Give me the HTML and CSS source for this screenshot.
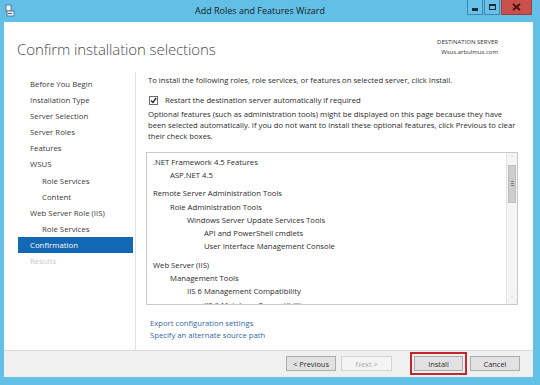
FILE: index.html
```html
<!DOCTYPE html>
<html lang="en">
<head>
    <meta charset="UTF-8">
    <title>Add Roles and Features Wizard</title>
    <link rel="stylesheet" href="styles.css">
</head>
<body>
    <div class="window">
        <div class="titlebar">
            <svg class="app-icon" width="10" height="13" viewBox="0 0 10 13">
                <rect x="1" y="1" width="5" height="6" fill="#f4f4f4" stroke="#4a6a86" stroke-width="0.8"/>
                <rect x="2" y="7" width="7" height="5" fill="#e8eef4" stroke="#4a6a86" stroke-width="0.8"/>
                <rect x="3" y="9" width="4" height="1" fill="#4a6a86"/>
            </svg>
            <div class="title">Add Roles and Features Wizard</div>
            <div class="caption-buttons">
                <div class="cap-btn min"><span class="min-glyph"></span></div>
                <div class="cap-btn max"><span class="max-glyph"></span></div>
                <div class="cap-btn close">
                    <svg width="9" height="8" viewBox="0 0 9 8">
                        <path d="M1 1 L8 7 M8 1 L1 7" stroke="#4a1414" stroke-width="2"/>
                    </svg>
                </div>
            </div>
        </div>

        <div class="client">
            <div class="main">
                <div class="header">
                    <h1>Confirm installation selections</h1>
                    <div class="dest">
                        <div>DESTINATION SERVER</div>
                        <div>Wsus.arbulmus.com</div>
                    </div>
                </div>

                <div class="body">
                    <ul class="nav">
                        <li>Before You Begin</li>
                        <li>Installation Type</li>
                        <li>Server Selection</li>
                        <li>Server Roles</li>
                        <li>Features</li>
                        <li>WSUS</li>
                        <li class="sub">Role Services</li>
                        <li class="sub">Content</li>
                        <li>Web Server Role (IIS)</li>
                        <li class="sub">Role Services</li>
                        <li class="active">Confirmation</li>
                        <li class="disabled">Results</li>
                    </ul>

                    <div class="content">
                        <p class="intro">To install the following roles, role services, or features on selected server, click Install.</p>
                        <label class="check-row">
                            <span class="checkbox">
                                <svg width="7" height="7" viewBox="0 0 7 7">
                                    <path d="M1 3.5 L3 5.5 L6.2 1" fill="none" stroke="#222" stroke-width="1.3"/>
                                </svg>
                            </span>
                            Restart the destination server automatically if required
                        </label>
                        <p class="note">Optional features (such as administration tools) might be displayed on this page because they have been selected automatically. If you do not want to install these optional features, click Previous to clear their check boxes.</p>

                        <div class="listbox">
                            <div class="list">
                                <div class="group">
                                    <div class="item">.NET Framework 4.5 Features</div>
                                    <div class="item l1">ASP.NET 4.5</div>
                                </div>
                                <div class="group">
                                    <div class="item">Remote Server Administration Tools</div>
                                    <div class="item l1">Role Administration Tools</div>
                                    <div class="item l2">Windows Server Update Services Tools</div>
                                    <div class="item l3">API and PowerShell cmdlets</div>
                                    <div class="item l3">User Interface Management Console</div>
                                </div>
                                <div class="group">
                                    <div class="item">Web Server (IIS)</div>
                                    <div class="item l1">Management Tools</div>
                                    <div class="item l2">IIS 6 Management Compatibility</div>
                                    <div class="item l3">IIS 6 Metabase Compatibility</div>
                                </div>
                            </div>
                            <div class="scrollbar">
                                <div class="arrow">&#708;</div>
                                <div class="track">
                                    <div class="thumb"><span class="grip"></span></div>
                                </div>
                                <div class="arrow">&#709;</div>
                            </div>
                        </div>

                        <div class="links">
                            <a href="#">Export configuration settings</a>
                            <a href="#">Specify an alternate source path</a>
                        </div>
                    </div>
                </div>
            </div>

            <div class="footer">
                <button class="btn">&lt; Previous</button>
                <button class="btn" disabled>Next &gt;</button>
                <button class="btn install">Install</button>
                <button class="btn">Cancel</button>
            </div>
        </div>
    </div>
</body>
</html>
```

FILE: styles.css
```css
* {
    box-sizing: border-box;
}

html, body {
    margin: 0;
    padding: 0;
}

body {
    font-family: 'Open Sans', 'Noto Sans', sans-serif;
    color: #2b2b2b;
    background-color: #62bfe6;
}

.window {
    width: 540px;
    height: 385px;
    display: flex;
    flex-direction: column;
}

/* タイトルバー */
.titlebar {
    height: 22px;
    display: flex;
    align-items: flex-start;
    position: relative;
}

.app-icon {
    margin: 4px 0 0 5px;
}

.title {
    position: absolute;
    left: 0;
    right: 20px;
    top: 4px;
    text-align: center;
    font-size: 9px;
    color: #1a1a1a;
}

.caption-buttons {
    margin-left: auto;
    margin-right: 8px;
    display: flex;
    gap: 1px;
}

.cap-btn {
    height: 15px;
    width: 16px;
    display: flex;
    align-items: center;
    justify-content: center;
    border: 1px solid #3f86ad;
    border-top: none;
    background-color: #66c2e8;
}

.cap-btn.close {
    width: 31px;
    background-color: #c9504b;
    border-color: #a43d38;
}

.min-glyph {
    width: 6px;
    height: 3px;
    margin-top: 5px;
    background-color: #1c2a35;
}

.max-glyph {
    width: 7px;
    height: 6px;
    border: 1px solid #1c2a35;
    border-top-width: 2px;
}

/* 本体 */
.client {
    flex: 1;
    margin: 0 7px 8px 4px;
    display: flex;
    flex-direction: column;
    background-color: #fff;
}

.main {
    flex: 1;
    display: flex;
    flex-direction: column;
}

.header {
    height: 50px;
    display: flex;
    justify-content: space-between;
    padding: 0 35px 0 13px;
}

.header h1 {
    margin: 16px 0 0;
    font-size: 15px;
    font-weight: 300;
    line-height: 22px;
    color: #4a4a4a;
    letter-spacing: -0.1px;
}

.dest {
    margin-top: 15px;
    text-align: right;
    font-size: 6px;
    line-height: 10px;
    color: #333;
}

.body {
    flex: 1;
    display: flex;
}

.nav {
    list-style: none;
    margin: 0;
    padding: 4px 0 0 14px;
    width: 132px;
    border-right: 1px solid #e3e3e3;
    font-size: 7.8px;
}

.nav li {
    height: 16.1px;
    line-height: 16px;
    padding-left: 12px;
    width: 115px;
    color: #3a3a3a;
    white-space: nowrap;
}

.nav li.sub {
    padding-left: 24px;
}

.nav li.active {
    background-color: #1368b4;
    color: #fff;
}

.nav li.disabled {
    color: #c9c9c9;
}

.content {
    flex: 1;
    padding: 3px 15px 0 10px;
    font-size: 7.7px;
}

.content p {
    margin: 0;
}

.intro {
    line-height: 11px;
    padding-left: 2px;
}

.check-row {
    display: flex;
    align-items: center;
    gap: 7px;
    margin: 9px 0 0 3px;
    line-height: 11px;
}

.checkbox {
    width: 9px;
    height: 9px;
    border: 1px solid #6d6d6d;
    display: flex;
    align-items: center;
    justify-content: center;
}

.note {
    margin-top: 3px !important;
    line-height: 11.2px;
    padding-left: 2px;
}

.listbox {
    margin-top: 9px;
    height: 153px;
    border: 1px solid #c9c9c9;
    display: flex;
    overflow: hidden;
}

.list {
    flex: 1;
    padding: 3px 0 0 6px;
    overflow: hidden;
}

.group + .group {
    margin-top: 5px;
}

.item {
    line-height: 13.3px;
    white-space: nowrap;
}

.item.l1 { padding-left: 17px; }
.item.l2 { padding-left: 34px; }
.item.l3 { padding-left: 51px; }

.scrollbar {
    width: 11px;
    display: flex;
    flex-direction: column;
    border-left: 1px solid #e4e4e4;
    background-color: #f4f4f4;
}

.arrow {
    height: 11px;
    font-size: 7px;
    line-height: 11px;
    text-align: center;
    color: #8a8a8a;
}

.track {
    flex: 1;
    padding-top: 1px;
}

.thumb {
    height: 38px;
    margin: 0 1px;
    background-color: #cdcdcd;
    border: 1px solid #bdbdbd;
    display: flex;
    align-items: center;
    justify-content: center;
}

.grip {
    width: 3px;
    height: 5px;
    border-top: 1px solid #7d7d7d;
    border-bottom: 1px solid #7d7d7d;
    background: linear-gradient(#7d7d7d, #7d7d7d) center / 3px 1px no-repeat;
}

.links {
    margin-top: 12px;
    padding-left: 4px;
    display: flex;
    flex-direction: column;
    line-height: 12px;
}

.links a {
    color: #3568a1;
    text-decoration: none;
}

/* フッター */
.footer {
    height: 27px;
    background-color: #f0f0f0;
    border-top: 1px solid #dadada;
    display: flex;
    align-items: center;
    justify-content: flex-end;
    padding: 0 13px 1px 0;
}

.btn {
    height: 15px;
    width: 50px;
    padding: 0;
    font-family: 'Open Sans', 'Noto Sans', sans-serif;
    font-size: 7.4px;
    color: #2b2b2b;
    background-color: #e2e2e2;
    border: 1px solid #acacac;
    border-radius: 0;
}

.btn + .btn {
    margin-left: 5px;
}

.btn:disabled {
    width: 51px;
    color: #a8a8a8;
    background-color: #f4f4f4;
    border-color: #d4d4d4;
}

.btn.install {
    width: 49px;
    margin-left: 22px;
    outline: 2px solid #c4262e;
    outline-offset: 2px;
}

.btn.install + .btn {
    margin-left: 7px;
}
```
